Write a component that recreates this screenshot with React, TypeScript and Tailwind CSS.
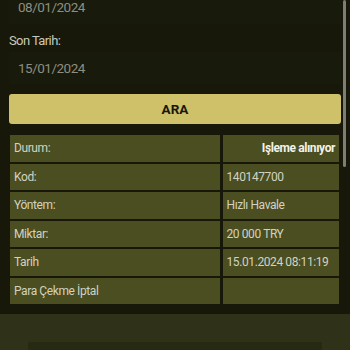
import React from "react";

const rows: [string, string, boolean?][] = [
  ["Durum:", "Işleme alınıyor", true],
  ["Kod:", "140147700"],
  ["Yöntem:", "Hızlı Havale"],
  ["Miktar:", "20 000 TRY"],
  ["Tarih", "15.01.2024 08:11:19"],
  ["Para Çekme İptal", ""],
];

export default function App() {
  return (
    <div
      className="relative w-[350px] h-[350px] overflow-hidden bg-[#17180a] flex flex-col"
      style={{ fontFamily: "Roboto, 'Noto Sans', sans-serif" }}
    >
      <div className="flex flex-col px-[9px] pr-[9px]">
        <div className="h-[24px] bg-[#181a0b] pl-[9px] text-[13.5px] leading-[14px] tracking-[-0.5px] text-[#8e8e80]">
          08/01/2024
        </div>
        <div className="mt-[9px] h-[16px] text-[13px] leading-[16px] tracking-[-0.6px] text-[#c9c9bb]">
          Son Tarih:
        </div>
        <div className="mt-[3px] h-[32px] bg-[#181a0b] pl-[9px] flex items-center text-[13.5px] tracking-[-0.5px] text-[#8e8e80]">
          15/01/2024
        </div>
        <div className="mt-[10px] h-[30px] rounded-[3px] bg-[#cfc06a] flex items-center justify-center text-[13.5px] font-bold text-[#17180a]">
          ARA
        </div>
      </div>
      <div className="mt-[11px] pl-[10px] pr-[11px] flex flex-col gap-[2px]">
        {rows.map(([k, v, bold]) => (
          <div key={k} className="flex gap-[2.5px] h-[26.5px]">
            <div className="w-[210px] bg-[#4a4e21] flex items-center pl-[4px] text-[12px] tracking-[-0.4px] text-[#d2d2c2]">
              {k}
            </div>
            <div
              className={
                bold
                  ? "flex-1 bg-[#4a4e21] flex items-center justify-end pr-[4px] text-[12px] tracking-[-0.4px] font-bold text-[#f2f2ea]"
                  : "flex-1 bg-[#4a4e21] flex items-center pl-[4px] text-[12px] tracking-[-0.4px] text-[#d2d2c2]"
              }
            >
              {v}
            </div>
          </div>
        ))}
      </div>
      <div className="mt-[10px] flex-1 bg-[#2f3218] flex flex-col">
        <div className="mt-[28px] ml-[28px] w-[294px] flex-1 bg-[#272a13]" />
      </div>
      <div className="absolute left-[343px] top-0 w-[3px] h-[167px] bg-[#7e7e74] rounded-full" />
    </div>
  );
}
